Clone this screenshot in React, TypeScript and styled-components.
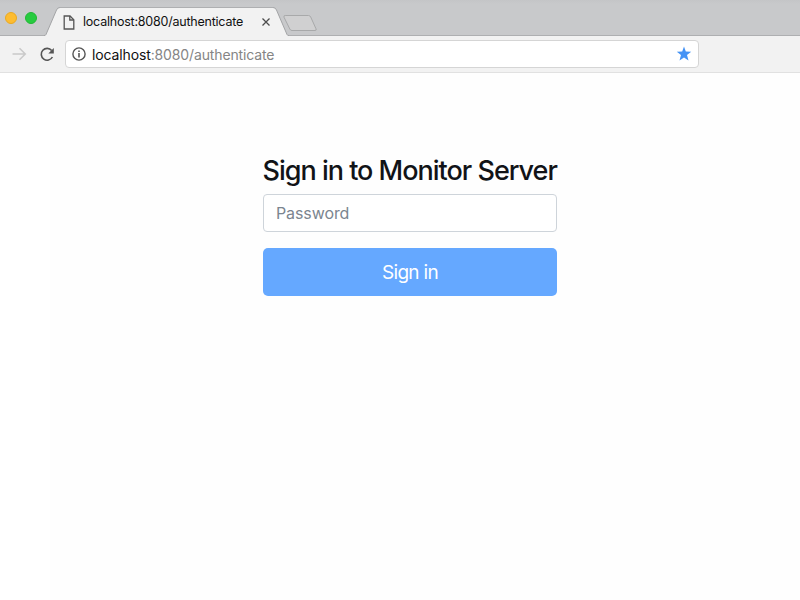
import React from "react";
import styled, { createGlobalStyle } from "styled-components";

const GlobalStyle = createGlobalStyle`
  * { box-sizing: border-box; }
  body { margin: 0; background: #fefefe; overflow: hidden; font-family: Inter, "Liberation Sans", sans-serif; }
`;

const Browser = styled.div`
  display: flex;
  flex-direction: column;
  height: 100vh;
`;

const TabStrip = styled.header`
  display: flex;
  align-items: flex-end;
  height: 36px;
  background: linear-gradient(#c4c5c7 0, #c8c9cb 4px, #c8c9cb 35px, #aeafb1 35px);
`;

const WindowControls = styled.div`
  display: flex;
  gap: 8px;
  width: 44px;
  height: 36px;
  padding: 12px 0 0 5px;
`;

const Light = styled.span<{ $color: string; $edge: string }>`
  width: 12px;
  height: 12px;
  border-radius: 50%;
  background: ${(p) => p.$color};
  border: 1px solid ${(p) => p.$edge};
`;

const Tab = styled.div`
  display: flex;
  height: 29px;
`;

const TabEdge = styled.svg`
  display: block;
  width: 16px;
  height: 29px;
`;

const TabBody = styled.div`
  display: flex;
  align-items: center;
  width: 213px;
  border-top: 1px solid #aeafb1;
  background: #f2f2f2;
  padding-left: 3px;
`;

const TabTitle = styled.span`
  width: 178px;
  margin-left: 8px;
  font-size: 12.5px;
  line-height: 16px;
  letter-spacing: -0.22px;
  white-space: nowrap;
  color: #111;
`;

const Icon = styled.svg`
  display: block;
  flex: none;
`;

const NewTab = styled.svg`
  display: block;
  width: 36px;
  height: 18px;
  margin: 0 0 4px -7px;
`;

const Toolbar = styled.nav`
  display: flex;
  align-items: center;
  height: 37px;
  padding-left: 12px;
  background: #f2f2f2;
  border-bottom: 1px solid #e1e1e1;
`;

const NavButton = styled.span`
  display: block;
  margin-right: 13px;
`;

const AddressBar = styled.div`
  display: flex;
  align-items: center;
  width: 634px;
  height: 28px;
  padding: 0 6px;
  margin-left: -3px;
  border: 1px solid #d5d5d5;
  border-radius: 4px;
  background: #fff;
`;

const Url = styled.span`
  flex: 1;
  margin-left: 6px;
  padding-top: 1px;
  font-size: 14px;
  line-height: 20px;
  letter-spacing: -0.13px;
  color: #858585;
`;

const Host = styled.span`
  color: #111;
`;

const Page = styled.main`
  flex: 1;
  padding-top: 81px;
  background: linear-gradient(90deg, #fff 50px, #fefefe 50px);
`;

const Form = styled.form`
  display: flex;
  flex-direction: column;
  width: 294px;
  margin-left: 263px;
`;

const Title = styled.h1`
  margin: 0 0 6px -0.5px;
  font-size: 27px;
  font-weight: 500;
  line-height: 34px;
  letter-spacing: -1px;
  white-space: nowrap;
  color: #111317;
`;

const Password = styled.input`
  height: 38px;
  padding: 0 12px;
  border: 1px solid #ced4da;
  border-radius: 4px;
  background: #fff;
  font: 400 16px/24px Inter, sans-serif;
  outline: none;
  &::placeholder { color: #7b858f; opacity: 1; letter-spacing: -0.1px; }
`;

const Submit = styled.button`
  height: 48px;
  margin-top: 16px;
  padding: 2px 0 0;
  border: 0;
  border-radius: 5px;
  background: #65a8ff;
  color: #fff;
  font: 400 19px/28px Inter, sans-serif;
  letter-spacing: -0.7px;
`;

export default function App() {
  return (
    <Browser>
      <GlobalStyle />
      <TabStrip>
        <WindowControls>
          <Light $color="#fdbc30" $edge="#eaa91f" />
          <Light $color="#27cb40" $edge="#20b834" />
        </WindowControls>
        <Tab>
          <TabEdge viewBox="0 0 16 29">
            <path d="M0 29 Q1.5 28.5 2 27.5 L12.5 3 Q13.5.5 16 .5 V29Z" fill="#f2f2f2" />
            <path d="M0 28.5 Q1.5 28.5 2 27.5 L12.5 3 Q13.5.5 16 .5" fill="none" stroke="#a3a4a6" />
          </TabEdge>
          <TabBody>
            <Icon width="12" height="15" viewBox="0 0 12 15" fill="none" stroke="#555" strokeWidth="1.3">
              <path d="M1.2 1H7L10.8 4.8V14H1.2Z" />
              <path d="M6.8 1V5H10.8" />
            </Icon>
            <TabTitle>localhost:8080/authenticate</TabTitle>
            <Icon width="10" height="10" viewBox="0 0 10 10" stroke="#4c4c4c" strokeWidth="1.3">
              <path d="M1.5 1.5 8.5 8.5M8.5 1.5 1.5 8.5" />
            </Icon>
          </TabBody>
          <TabEdge viewBox="0 0 16 29">
            <path d="M16 29 Q14.5 28.5 14 27.5 L3.5 3 Q2.5.5 0 .5 V29Z" fill="#f2f2f2" />
            <path d="M16 28.5 Q14.5 28.5 14 27.5 L3.5 3 Q2.5.5 0 .5" fill="none" stroke="#a3a4a6" />
          </TabEdge>
        </Tab>
        <NewTab viewBox="0 0 36 18">
          <path d="M3.2 1.5H26.5Q28 1.5 28.7 3L34 14.8Q34.8 16.5 33 16.5H10Q8.5 16.5 7.8 15L2 3.2Q1.4 1.5 3.2 1.5Z" fill="#d0d0d1" stroke="#a8a9aa" />
        </NewTab>
      </TabStrip>
      <Toolbar>
        <NavButton>
          <Icon width="15" height="14" viewBox="0 0 15 14" fill="none" stroke="#c9c9c9" strokeWidth="1.5">
            <path d="M.5 7H13M7.5 1.2 13.3 7 7.5 12.8" />
          </Icon>
        </NavButton>
        <NavButton>
          <Icon width="15" height="15" viewBox="0 0 15 15">
            <path d="M12.4 10A5.9 5.9 0 1 1 11.7 3.5" fill="none" stroke="#555" strokeWidth="1.6" />
            <path d="M13.8 1V6.5H8.3Z" fill="#555" />
          </Icon>
        </NavButton>
        <AddressBar>
          <Icon width="14" height="14" viewBox="0 0 14 14">
            <circle cx="7" cy="7" r="6.1" fill="none" stroke="#555" strokeWidth="1.4" />
            <path d="M6.2 3.4H7.8V4.9H6.2ZM6.2 6H7.8V10.6H6.2Z" fill="#555" />
          </Icon>
          <Url>
            <Host>localhost</Host>:8080/authenticate
          </Url>
          <Icon width="16" height="16" viewBox="0 0 16 16">
            <path d="M8 .6 9.8 5.6 15.2 5.8 11 9.1 12.5 14.4 8 11.4 3.5 14.4 5 9.1.8 5.8 6.2 5.6Z" fill="#4593f5" />
          </Icon>
        </AddressBar>
      </Toolbar>
      <Page>
        <Form>
          <Title>Sign in to Monitor Server</Title>
          <Password type="password" placeholder="Password" />
          <Submit type="button">Sign in</Submit>
        </Form>
      </Page>
    </Browser>
  );
}
